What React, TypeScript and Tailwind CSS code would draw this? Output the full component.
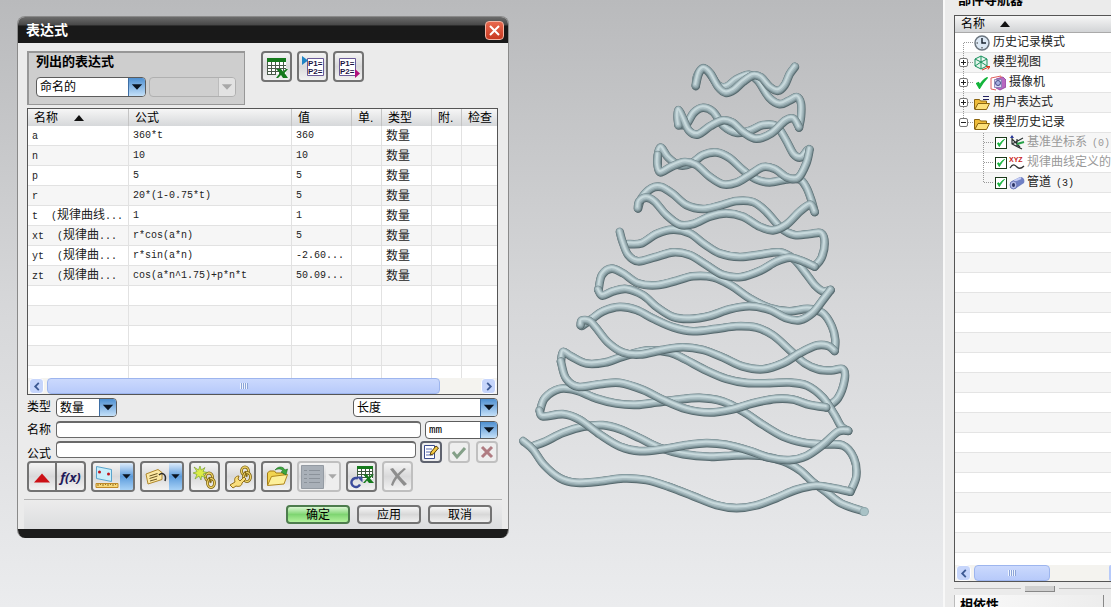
import React from "react";

type Point = [number, number];

type Turn = {
  at: string;
  back: Point[];
  front: Point[];
};

const TURNS: Turn[] = [
  {
    at: "translate(240 0)",
    back: [[318, 108], [322, 78], [340, 54], [360, 70], [385, 105], [410, 110], [440, 88], [478, 74], [505, 92], [538, 142], [570, 162], [598, 152], [622, 141], [634, 160], [634, 200], [628, 232]],
    front: [[616, 50], [600, 72], [585, 105], [565, 122], [540, 110], [515, 82], [490, 76], [460, 95], [432, 120], [408, 128], [385, 110], [362, 70], [343, 55], [328, 68], [318, 106]],
  },
  {
    at: "translate(240 0)",
    back: [[266, 224], [290, 222], [312, 188], [340, 173], [370, 185], [402, 228], [440, 248], [480, 242], [520, 225], [560, 228], [588, 268], [612, 312], [634, 322], [652, 302], [658, 298]],
    front: [[628, 232], [612, 206], [586, 212], [545, 250], [500, 266], [462, 247], [430, 218], [398, 211], [362, 228], [325, 253], [298, 242], [280, 205], [267, 180], [263, 200], [266, 226]],
  },
  {
    at: "translate(240 0)",
    back: [[204, 340], [205, 308], [215, 293], [235, 322], [270, 346], [305, 340], [340, 315], [380, 307], [420, 324], [460, 360], [500, 388], [540, 397], [590, 388], [630, 388], [650, 412], [665, 450], [675, 486]],
    front: [[660, 298], [650, 340], [625, 384], [592, 382], [556, 357], [520, 351], [480, 375], [440, 398], [400, 403], [360, 380], [320, 345], [285, 336], [245, 350], [212, 367], [203, 345], [204, 315]],
  },
  {
    at: "translate(240 0)",
    back: [[145, 475], [155, 445], [185, 415], [215, 411], [250, 432], [290, 465], [340, 477], [390, 467], [440, 453], [490, 456], [530, 485], [575, 535], [615, 555], [660, 552], [695, 550], [705, 580], [695, 625], [675, 650]],
    front: [[675, 486], [662, 464], [630, 485], [590, 524], [550, 541], [510, 530], [460, 500], [410, 490], [360, 500], [310, 522], [270, 524], [230, 495], [195, 455], [170, 443], [148, 455], [144, 475]],
  },
  {
    at: "translate(180 420)",
    back: [[175, 162], [215, 160], [260, 132], [310, 119], [360, 130], [405, 163], [450, 190], [510, 201], [570, 194], [630, 187], [672, 207], [710, 252], [735, 285], [760, 304], [783, 300]],
    front: [[735, 230], [700, 214], [660, 203], [620, 215], [570, 243], [515, 261], [460, 255], [410, 225], [360, 195], [310, 187], [255, 202], [205, 214], [175, 195], [158, 155], [150, 126]],
  },
  {
    at: "translate(180 420)",
    back: [[86, 300], [96, 256], [125, 236], [160, 250], [205, 280], [260, 286], [315, 274], [370, 259], [430, 262], [485, 287], [540, 325], [600, 354], [660, 364], [715, 357], [760, 370], [787, 410], [797, 450], [795, 483]],
    front: [[783, 300], [760, 330], [728, 370], [690, 391], [650, 385], [600, 360], [540, 349], [480, 358], [420, 378], [360, 387], [310, 381], [262, 352], [220, 316], [170, 297], [130, 304], [98, 317], [85, 300]],
  },
  {
    at: "translate(180 420)",
    back: [[36, 408], [65, 388], [100, 364], [150, 351], [200, 360], [250, 386], [310, 412], [370, 424], [440, 417], [500, 409], [560, 413], [610, 436], [660, 480], [705, 520], [745, 538], [785, 542], [820, 538], [825, 570], [805, 625], [770, 653]],
    front: [[795, 483], [775, 468], [740, 467], [690, 490], [640, 520], [580, 538], [520, 530], [460, 503], [400, 480], [340, 472], [280, 480], [210, 494], [160, 488], [115, 458], [80, 415], [60, 394], [36, 392], [32, 406]],
  },
  {
    at: "translate(0 840)",
    back: [[153, 95], [160, 66], [185, 80], [230, 101], [285, 98], [340, 80], [410, 62], [480, 68], [525, 88], [590, 122], [650, 147], [710, 159], [780, 160], [840, 158], [892, 167], [940, 203], [975, 255], [995, 290], [1016, 303]],
    front: [[950, 233], [900, 225], [850, 209], [800, 207], [730, 220], [670, 238], [600, 248], [530, 238], [460, 210], [400, 180], [330, 159], [270, 163], [205, 171], [168, 145], [153, 95]],
  },
  {
    at: "translate(0 840)",
    back: [[90, 245], [105, 205], [150, 177], [200, 182], [260, 206], [320, 221], [380, 225], [440, 218], [500, 210], [570, 204], [640, 215], [700, 245], [760, 285], [820, 320], [880, 338], [940, 344], [1000, 347], [1033, 385], [1040, 440], [1022, 486]],
    front: [[1016, 303], [985, 306], [940, 345], [890, 379], [840, 391], [780, 384], [720, 363], [650, 345], [590, 340], [530, 346], [460, 358], [390, 364], [330, 350], [270, 314], [210, 270], [160, 253], [100, 260], [89, 243]],
  },
  {
    at: "translate(0 840)",
    back: [[72, 348], [105, 336], [160, 309], [220, 291], [280, 286], [330, 298], [390, 325], [450, 354], [520, 373], [600, 381], [680, 377], [750, 378], [820, 394], [870, 421], [910, 457], [950, 487], [995, 521], [1060, 544]],
    front: [[1022, 486], [970, 475], [920, 468], [860, 480], [800, 505], [740, 527], [680, 535], [620, 526], [550, 499], [480, 472], [410, 451], [340, 446], [270, 455], [200, 459], [150, 445], [102, 405], [70, 360], [40, 334]],
  },
];

// Catmull-Rom through the points, written as cubic segments
function smooth(points: Point[]) {
  let d = `M${points[0][0]} ${points[0][1]}`;
  for (let i = 0; i < points.length - 1; i++) {
    const a = points[i - 1] ?? points[i];
    const b = points[i];
    const c = points[i + 1];
    const e = points[i + 2] ?? c;
    d += `C${b[0] + (c[0] - a[0]) / 6} ${b[1] + (c[1] - a[1]) / 6} ${c[0] - (e[0] - b[0]) / 6} ${c[1] - (e[1] - b[1]) / 6} ${c[0]} ${c[1]}`;
  }
  return d;
}

function Tube({ points, at }: { points: Point[]; at: string }) {
  const d = smooth(points);
  return (
    <g transform={at} fill="none" strokeLinecap="round" strokeLinejoin="round">
      <path d={d} stroke="#56696e" strokeWidth="25" transform="translate(0 1)" />
      <path d={d} stroke="#7b9095" strokeWidth="23" transform="translate(-1 -1)" />
      <path d={d} stroke="#96abb0" strokeWidth="18" transform="translate(-1 -2)" />
      <path d={d} stroke="#adc0c5" strokeWidth="13" transform="translate(-2 -3)" />
      <path d={d} stroke="#c8d9dc" strokeWidth="6" transform="translate(-2 -4)" />
    </g>
  );
}

function SpringModel() {
  return (
    <svg viewBox="0 0 1090 1400" className="mt-[34px] ml-px w-[363px] shrink-0" aria-label="管道">
      {TURNS.map((turn, i) => (
        <Tube key={i} points={turn.back} at={turn.at} />
      ))}
      {TURNS.map((turn, i) => (
        <Tube key={i} points={turn.front} at={turn.at} />
      ))}
      <circle cx="1064" cy="1386" r="14" fill="#8fa7ac" />
      <circle cx="1064" cy="1386" r="11" fill="#a9c2c6" />
    </svg>
  );
}

function Arrow({ muted }: { muted?: boolean }) {
  return (
    <svg viewBox="0 0 17 17" className="block h-full w-full">
      <path d="M3 5.500h11l-5.500 6z" fill={muted ? "#a8a8a8" : "#0b1420"} />
    </svg>
  );
}

type PickerProps = {
  label: string;
  value: string;
  className: string;
  disabled?: boolean;
  mono?: boolean;
};

function Picker({ label, value, className, disabled, mono }: PickerProps) {
  return (
    <div className={`relative ${className}`}>
      <select
        aria-label={label}
        disabled={disabled}
        className={`block h-full w-full appearance-none rounded border pl-[3px] leading-4 ${
          mono ? "font-['Liberation_Mono',monospace] text-[11px]" : "text-xs"
        } ${disabled ? "border-[#b0b0b0] bg-[#cfcfcf]" : "border-[#5c5c5c] bg-white text-black"}`}
      >
        <option>{value}</option>
      </select>
      <span
        className={`pointer-events-none absolute top-px right-px bottom-px w-[17px] rounded-r-[3px] border-l ${
          disabled
            ? "border-[#bcbcbc] bg-[#e2e2e2]"
            : "border-[#3d6ea5] bg-linear-to-b from-[#4d8fd0] to-[#c4e0f8]"
        }`}
      >
        <Arrow muted={disabled} />
      </span>
    </div>
  );
}

type ToolProps = {
  label: string;
  children: React.ReactNode;
  disabled?: boolean;
  menu?: boolean;
};

function Tool({ label, children, disabled, menu }: ToolProps) {
  return (
    <div
      className={`flex h-[31px] shrink-0 overflow-hidden rounded border-2 bg-linear-to-b from-[#f4f4f4] via-[#d9d9da] to-[#f2f2f2] ${
        disabled ? "border-[#bfbfbf]" : "border-[#737373]"
      }`}
    >
      <button type="button" aria-label={label} disabled={disabled} className="flex w-[27px] items-center justify-center">
        {children}
      </button>
      {menu && (
        <button
          type="button"
          aria-label={`${label}菜单`}
          disabled={disabled}
          className={`w-[13px] ${disabled ? "bg-[#eeeeee]" : "bg-linear-to-b from-[#dcebfa] via-[#5c9cdc] to-[#a8d2f6]"}`}
        >
          <Arrow muted={disabled} />
        </button>
      )}
    </div>
  );
}

function SheetIcon() {
  return (
    <svg viewBox="0 0 24 24" className="size-6">
      <path d="M2 3h19v16H2z" fill="#fff" />
      <path d="M2 3h19v4H2z" fill="#157a1c" />
      <path d="M2.500 7v12M6.500 7v12M10.500 7v12M14.500 7v12M18.500 7v9M2 10.500h19M2 13.500h19M2 16.500h12M2 19.500h9" stroke="#4a5a4a" fill="none" />
      <path d="M11 14h5l2 2.500 3-2.500h2l-3.500 4 3.500 5h-5l-2-3-3 3h-2l4-5z" fill="#157a1c" />
    </svg>
  );
}

function ParamIcon({ out }: { out?: boolean }) {
  return (
    <svg viewBox="0 0 24 24" className="size-6">
      <path d={out ? "M2.500 3.500h16v17h-16z" : "M6.500 3.500h16v17h-16z"} fill="#fff" stroke="#6a5a98" />
      <g fill="#1c1444" fontFamily="Liberation Sans, sans-serif" fontSize="8" fontWeight="bold">
        <text x={out ? 3 : 7} y="11">P1=</text>
        <text x={out ? 3 : 7} y="19">P2=</text>
      </g>
      <path d={out ? "M18 14l5 4.500-5 4.500z" : "M1 1l6 4.500-6 4.500z"} fill={out ? "#b0107c" : "#1f84c4"} />
    </svg>
  );
}

function MeasureIcon() {
  return (
    <svg viewBox="0 0 24 24" className="size-6">
      <path d="M1.500 1.500l15 3v12l-15-3z" fill="#c9eefa" stroke="#5aa4cc" />
      <circle cx="4.500" cy="7" r="1.500" fill="#c0141c" />
      <circle cx="13.500" cy="9" r="1.500" fill="#c0141c" />
      <path d="M1 18.500h22v4H1z" fill="#f7d778" stroke="#c08a28" />
      <path d="M3 19v2M5.500 19v1M8 19v2M10.500 19v1M13 19v2M15.500 19v1M18 19v2M20.500 19v1" stroke="#7c5a14" strokeWidth=".8" />
    </svg>
  );
}

function TagIcon() {
  return (
    <svg viewBox="0 0 24 24" className="size-6">
      <path d="M2 9l12-4.500 4 3v7L4 19z" fill="#fce9a4" stroke="#b0872c" />
      <path d="M5.500 11l8-2.500M5.500 13.500l8-2.500M6 16l7-2" stroke="#6a5420" />
      <path d="M15 10c3-3 8-1 6 6" stroke="#2a2a2a" fill="none" strokeWidth="1.500" />
    </svg>
  );
}

// two interlocked links, drawn as a dark ring under a gold one
function Chain({ at }: { at: string }) {
  return (
    <g fill="none" transform={at}>
      <ellipse cx="5" cy="5" rx="3.500" ry="4" stroke="#7c6210" strokeWidth="2.800" />
      <ellipse cx="5" cy="5" rx="3.500" ry="4" stroke="#f0d468" strokeWidth="1.300" />
      <ellipse cx="7" cy="11" rx="3.500" ry="4.500" stroke="#7c6210" strokeWidth="2.800" />
      <ellipse cx="7" cy="11" rx="3.500" ry="4.500" stroke="#f0d468" strokeWidth="1.300" />
      <path d="M5 5l2 6" stroke="#7c6210" strokeWidth="1.200" />
    </g>
  );
}

function NewLinkIcon() {
  return (
    <svg viewBox="0 0 24 24" className="size-6">
      <Chain at="translate(11 7)" />
      <path d="M7 1l1.200 4L12 2.500 10 6.500l4.500 1L10 9l3 4-4.500-2L8 15l-2-4-4 3 2-4.500L0 8l4-1.500L1 2l4.500 3z" fill="#dcec48" stroke="#6c9a24" strokeWidth=".6" />
    </svg>
  );
}

function EditLinkIcon() {
  return (
    <svg viewBox="0 0 24 24" className="size-6">
      <Chain at="translate(11 1)" />
      <path d="M1 20l5-3c-1-3 0-6 4-6l-1 3 2 2 4-4 2 2-4 4c0 3-3 4-6 3l-3 2z" fill="#f9de7c" stroke="#96721a" />
    </svg>
  );
}

function OpenIcon() {
  return (
    <svg viewBox="0 0 24 24" className="size-6">
      <path d="M2.500 20V8l2-2h5l1.500 2h8v4" fill="#f2d450" stroke="#a47c14" />
      <path d="M2.500 20.500l4-9 16-2-3.500 9.500z" fill="#fdf09a" stroke="#b0861c" />
      <path d="M10 5c3-4 8-4 10 0l2.500-1L21 10l-5-3 2-1c-2-2.500-5-2.500-8-1z" fill="#3ca83c" stroke="#1c6c20" strokeWidth=".6" />
    </svg>
  );
}

function ListIcon() {
  return (
    <svg viewBox="0 0 24 24" className="size-6">
      <path d="M.5.500h22v23H.5z" fill="#a9b0b8" stroke="#949ba3" />
      <path d="M3 5.500h3M8 5.500h11M3 9.500h3M8 9.500h11M3 13.500h3M8 13.500h11M3 17.500h3M8 17.500h11" stroke="#8b929a" />
    </svg>
  );
}

function RefreshSheetIcon() {
  return (
    <svg viewBox="0 0 24 24" className="size-6">
      <path d="M7 1h16v13H7z" fill="#fff" />
      <path d="M7 1h16v3H7z" fill="#157a1c" />
      <path d="M7.500 4v9M11.500 4v9M15.500 4v9M19.500 4v9M22.500 4v9M7 6.500h16M7 9.500h16M7 12.500h10" stroke="#3f5a3f" fill="none" />
      <path d="M13 9.500h4l2 2.500 3-2.500h2l-4 4 4 4.500h-5l-2-2.500-2 2.500h-2l4-4.500z" fill="#157a1c" />
      <path d="M8 13.500a4.500 4.500 0 1 0 2 6" stroke="#3c4c9c" strokeWidth="2.400" fill="none" />
      <path d="M6.500 11.500h6v6z" fill="#3c4c9c" />
    </svg>
  );
}

function MiniTool({ label, disabled, children }: ToolProps) {
  return (
    <button
      type="button"
      aria-label={label}
      disabled={disabled}
      className={`size-[22px] shrink-0 rounded border-2 bg-[#eeeeee] ${disabled ? "border-[#c0c0c0]" : "border-[#5e626e]"}`}
    >
      {children}
    </button>
  );
}

function ScrollEnd({ left }: { left?: boolean }) {
  return (
    <button
      type="button"
      aria-label={left ? "向左滚动" : "向右滚动"}
      className="flex w-[15px] shrink-0 items-center justify-center rounded-sm border border-white bg-[#c6d5fb]"
    >
      <svg viewBox="0 0 8 10" className="h-[9px] w-2">
        <path d={left ? "M6 1L2 5l4 4" : "M2 1l4 4-4 4"} fill="none" stroke="#3d5a94" strokeWidth="2" />
      </svg>
    </button>
  );
}

function Thumb({ className }: { className: string }) {
  return (
    <div className={`flex items-center justify-center rounded-sm border border-[#9db5ee] bg-linear-to-b from-[#cbd9fd] to-[#b7cafa] ${className}`}>
      <svg viewBox="0 0 8 6" className="h-1.5 w-2">
        <path d="M.5 0v6M2.500 0v6M4.500 0v6M6.500 0v6" stroke="#eef4fe" />
        <path d="M1.500 0v6M3.500 0v6M5.500 0v6M7.500 0v6" stroke="#8ca4d8" />
      </svg>
    </div>
  );
}

function SortMark({ className }: { className: string }) {
  return (
    <svg viewBox="0 0 10 6" className={`inline h-1.5 w-2.5 ${className}`}>
      <path d="M0 6l5-6 5 6z" fill="#111" />
    </svg>
  );
}

type Expression = {
  name: string;
  note?: string;
  formula: string;
  value: string;
};

const EXPRESSIONS: Expression[] = [
  { name: "a", formula: "360*t", value: "360" },
  { name: "n", formula: "10", value: "10" },
  { name: "p", formula: "5", value: "5" },
  { name: "r", formula: "20*(1-0.75*t)", value: "5" },
  { name: "t", note: "规律曲线", formula: "1", value: "1" },
  { name: "xt", note: "规律曲", formula: "r*cos(a*n)", value: "5" },
  { name: "yt", note: "规律曲", formula: "r*sin(a*n)", value: "-2.60..." },
  { name: "zt", note: "规律曲", formula: "cos(a*n^1.75)+p*n*t", value: "50.09..." },
];

const CELL = "overflow-hidden border-r border-b border-[#e2e2e2] p-0 pl-1 whitespace-nowrap last:border-r-0";
const HEAD = "border-r border-[#c4c4c4] p-0 pl-1.5 text-left font-normal whitespace-nowrap last:border-r-0";
const MONO = "font-['Liberation_Mono',monospace] text-[10px] text-[#222]";

function ExpressionTable() {
  return (
    <div className="border border-[#555] bg-white">
      <div className="h-[269px] overflow-hidden">
        <table className="w-full table-fixed border-separate border-spacing-0 text-xs">
          <colgroup>
            <col className="w-[101px]" />
            <col />
            <col className="w-[60px]" />
            <col className="w-[30px]" />
            <col className="w-[50px]" />
            <col className="w-[30px]" />
            <col className="w-[35px]" />
          </colgroup>
          <thead>
            <tr className="h-[17px] bg-linear-to-b from-[#f6f6f6] to-[#d6d8da] leading-4">
              <th className={HEAD}>
                名称
                <SortMark className="ml-4" />
              </th>
              <th className={HEAD}>公式</th>
              <th className={HEAD}>值</th>
              <th className={HEAD}>单.</th>
              <th className={HEAD}>类型</th>
              <th className={HEAD}>附.</th>
              <th className={HEAD}>检查</th>
            </tr>
          </thead>
          <tbody>
            {EXPRESSIONS.map((row) => (
              <tr key={row.name} className="h-5 leading-4 even:bg-[#f6f6f6]">
                <td className={CELL}>
                  <span className={MONO}>{row.name}</span>
                  {row.note && (
                    <span className="ml-[13px] text-[#222]">
                      <span className={MONO}>(</span>
                      {row.note}
                      <span className={MONO}>...</span>
                    </span>
                  )}
                </td>
                <td className={`${CELL} ${MONO}`}>{row.formula}</td>
                <td className={`${CELL} ${MONO}`}>{row.value}</td>
                <td className={CELL} />
                <td className={`${CELL} text-[#222]`}>数量</td>
                <td className={CELL} />
                <td className={CELL} />
              </tr>
            ))}
            {[0, 1, 2, 3, 4].map((n) => (
              <tr key={n} className="h-5 even:bg-[#f6f6f6]">
                {[0, 1, 2, 3, 4, 5, 6].map((c) => (
                  <td key={c} className={CELL} />
                ))}
              </tr>
            ))}
          </tbody>
        </table>
      </div>
      <div className="flex h-4 gap-[3px] bg-[#f4f3ef] px-px">
        <ScrollEnd left />
        <Thumb className="w-[393px]" />
        <div className="flex-1" />
        <ScrollEnd />
      </div>
    </div>
  );
}

const FIELD = "h-[17px] min-w-0 flex-1 rounded border border-t-2 border-[#6a6a6a] bg-white px-1 text-xs";
const ACTION = "h-[19px] w-16 rounded border-2 text-xs leading-[14px] text-black";

function ExpressionDialog() {
  return (
    <section className="flex w-[492px] shrink-0 flex-col overflow-hidden rounded-t-lg rounded-b-lg border border-[#8a8a8a] border-b-0 bg-[#ebebeb]">
      <header className="flex h-[26px] items-center justify-between bg-linear-to-b from-[#6c6c6c] from-0% via-[#484848] via-30% to-[#191919] to-35% pr-1 pl-2">
        <h1 className="text-sm leading-5 font-bold text-white">表达式</h1>
        <button type="button" aria-label="关闭" className="flex size-[19px] items-center justify-center rounded-sm border border-[#f4b4a4] bg-linear-to-b from-[#e8684e] to-[#c83820]">
          <svg viewBox="0 0 11 11" className="size-[11px]">
            <path d="M1 1l9 9M10 1l-9 9" stroke="#fff" strokeWidth="2" />
          </svg>
        </button>
      </header>

      <div className="flex flex-col pt-2 pr-2.5 pl-[9px]">
        <div className="flex items-start">
          <fieldset className="mr-4 flex h-[54px] w-[218px] flex-col border border-t-2 border-l-2 border-[#979797] bg-[#cecece] pl-[7px]">
            <span className="pt-px text-[13px] leading-4 font-bold">列出的表达式</span>
            <div className="mt-[7px] flex gap-[3px]">
              <Picker label="列出的表达式" value="命名的" className="h-5 w-[110px]" />
              <Picker label="过滤器" value="" className="h-5 w-[87px]" disabled />
            </div>
          </fieldset>
          <div className="flex gap-[5px]">
            <Tool label="电子表格编辑">
              <SheetIcon />
            </Tool>
            <Tool label="导入表达式">
              <ParamIcon />
            </Tool>
            <Tool label="导出表达式">
              <ParamIcon out />
            </Tool>
          </div>
        </div>

        <div className="mt-[3px]">
          <ExpressionTable />
        </div>

        <div className="mt-[3px] flex h-[19px] text-xs leading-[19px]">
          <span className="w-[29px]">类型</span>
          <Picker label="类型" value="数量" className="w-[61px]" />
          <div className="flex-1" />
          <Picker label="量纲" value="长度" className="w-[145px]" />
        </div>
        <div className="mt-1 flex h-[18px] text-xs leading-[18px]">
          <label htmlFor="expression-name" className="w-[29px]">名称</label>
          <input id="expression-name" className={FIELD} />
          <Picker label="单位" value="mm" className="ml-1 w-[73px]" mono />
        </div>
        <div className="mt-0.5 flex h-5 text-xs">
          <label htmlFor="expression-formula" className="w-[29px] pt-1 leading-[18px]">公式</label>
          <input id="expression-formula" className={FIELD} />
          <div className="ml-1 flex gap-1.5">
            <MiniTool label="编辑公式">
              <svg viewBox="0 0 18 18" className="size-[18px]">
                <path d="M2.500 2.500h10v13h-10z" fill="#fff" stroke="#3a4a8c" />
                <path d="M4 6h6M4 9h5M4 12h7" stroke="#5a6cb4" />
                <path d="M8 12l1-3 5-6 2.500 2-5 6z" fill="#f2c640" stroke="#5a4410" />
              </svg>
            </MiniTool>
            <MiniTool label="接受" disabled>
              <svg viewBox="0 0 18 18" className="size-[18px]">
                <path d="M3 9l4 5 8-9" fill="none" stroke="#84a088" strokeWidth="3" />
              </svg>
            </MiniTool>
            <MiniTool label="拒绝" disabled>
              <svg viewBox="0 0 18 18" className="size-[18px]">
                <path d="M4 4l10 10M14 4L4 14" stroke="#b07c82" strokeWidth="3" />
              </svg>
            </MiniTool>
          </div>
        </div>

        <div className="flex gap-[5px]">
          <div className="flex h-[31px] w-[59px] overflow-hidden rounded border-2 border-[#737373] bg-linear-to-b from-[#f4f4f4] via-[#d9d9da] to-[#f2f2f2]">
            <button type="button" aria-label="更少选项" className="flex w-[28px] items-center justify-center border-r-2 border-[#737373]">
              <svg viewBox="0 0 18 10" className="mt-0.5 h-2.5 w-4">
                <path d="M0 10L9 0l9 10z" fill="#cc1016" />
              </svg>
            </button>
            <button type="button" className="flex-1 font-['Open_Sans',sans-serif] text-[13px] leading-5 font-bold text-[#221a58] italic">
              f(x)
            </button>
          </div>
          <Tool label="测量" menu>
            <MeasureIcon />
          </Tool>
          <Tool label="属性" menu>
            <TagIcon />
          </Tool>
          <Tool label="创建部件间表达式">
            <NewLinkIcon />
          </Tool>
          <Tool label="编辑部件间表达式">
            <EditLinkIcon />
          </Tool>
          <Tool label="打开引用的部件">
            <OpenIcon />
          </Tool>
          <Tool label="函数" menu disabled>
            <ListIcon />
          </Tool>
          <Tool label="更新外部表达式">
            <RefreshSheetIcon />
          </Tool>
          <Tool label="删除" disabled>
            <svg viewBox="0 0 24 24" className="size-6">
              <path d="M4 4l3-1c4 5 8 10 14 16l-3 2C13 15 8 10 4 4z" fill="#8e8e8e" />
              <path d="M18 3l2 1C14 9 9 15 7 21l-2-1C7 13 12 8 18 3z" fill="#8e8e8e" />
            </svg>
          </Tool>
        </div>
      </div>

      <footer className="mx-1.5 mt-[7px] flex h-[30px] justify-end gap-[7px] border-t border-[#b4b4b4] bg-linear-to-b from-[#ececec] to-[#dcdddf] pt-[5px] pr-2.5">
        <button type="button" className={`${ACTION} border-[#4d7c4d] bg-linear-to-b from-[#d8f6d0] via-[#7fd572] to-[#b2f29c]`}>
          确定
        </button>
        <button type="button" className={`${ACTION} border-[#737373] bg-linear-to-b from-[#f6f6f6] via-[#d8d8d8] to-[#f0f0f0]`}>
          应用
        </button>
        <button type="button" className={`${ACTION} border-[#737373] bg-linear-to-b from-[#f6f6f6] via-[#d8d8d8] to-[#f0f0f0]`}>
          取消
        </button>
      </footer>
      <div className="h-[9px] bg-[#1c1c1c]" />
    </section>
  );
}

function Branch({ open, first, last }: { open?: boolean; first?: boolean; last?: boolean }) {
  return (
    <svg viewBox="0 0 19 20" className="block h-5 w-[19px]">
      <path d={`M8.500 ${first ? 10 : 0}V${last ? 10 : 20}M9 9.500h10`} stroke="#999" strokeDasharray="1 1" fill="none" />
      {!first && (
        <>
          <rect x="4.500" y="5.500" width="8" height="8" rx="1.500" fill="#fff" stroke="#777" />
          <path d={open ? "M6 9.500h5" : "M6 9.500h5M8.500 7v5"} stroke="#222" />
        </>
      )}
    </svg>
  );
}

function FolderIcon({ marked }: { marked?: boolean }) {
  return (
    <svg viewBox="0 0 16 16" className="size-4">
      <path d="M.5 14V4.500h5l1 1.500h6v3" fill="#f0bc38" stroke="#8a6410" />
      <path d="M.8 14.500L4 8.500h11.500l-3 6z" fill="#fde07a" stroke="#8a6410" />
      {marked && <path d="M9 1.500h6M9 4.500h6" stroke="#222060" />}
    </svg>
  );
}

function Tick({ className }: { className: string }) {
  return (
    <svg viewBox="0 0 12 12" className={className}>
      <path d="M.5 6.500L3.500 11.500C6 7 8.500 3.500 11.500.5 8 2 5.500 5 4 7.800L2.500 5.500z" fill="#12b43a" stroke="#12b43a" strokeWidth="1.200" />
    </svg>
  );
}

type NodeProps = {
  icon: React.ReactNode;
  text: string;
  open?: boolean;
  first?: boolean;
  last?: boolean;
};

const NODE = "flex h-5 items-center border-b border-[#e4e4e4] whitespace-nowrap even:bg-[#f6f6f6]";

function TreeNode({ open, first, last, icon, text }: NodeProps) {
  return (
    <li className={NODE}>
      {first ? (
        <Branch first />
      ) : (
        <button type="button" aria-label={`${open ? "折叠" : "展开"}${text}`}>
          <Branch open={open} last={last} />
        </button>
      )}
      {icon}
      <span className="ml-[3px] text-[#222]">{text}</span>
    </li>
  );
}

type LeafProps = {
  icon: React.ReactNode;
  text: string;
  count?: string;
  muted?: boolean;
  last?: boolean;
};

function TreeLeaf({ icon, text, count, muted, last }: LeafProps) {
  return (
    <li className={NODE}>
      <svg viewBox="0 0 40 20" className="h-5 w-10 shrink-0">
        <path d={`M28.500 0V${last ? 10 : 20}M29 9.500h9`} stroke="#999" strokeDasharray="1 1" fill="none" />
      </svg>
      <label className="flex items-center">
        <span className="relative mr-0.5 size-3">
          <input type="checkbox" defaultChecked className="block size-3 appearance-none border border-[#1a3a1a] bg-white" />
          <Tick className="pointer-events-none absolute top-0.5 left-0.5 size-2" />
        </span>
        {icon}
        <span className={muted ? "ml-0.5 text-[#999]" : "ml-0.5 text-[#222]"}>
          {text}
          {count && <span className="ml-[5px] font-['Liberation_Mono',monospace] text-[10px]">{count}</span>}
        </span>
      </label>
    </li>
  );
}

function PartNavigator() {
  return (
    <aside className="flex w-[168px] shrink-0 flex-col overflow-hidden border-l-2 border-[#f8f8f8] bg-[#ebebeb] pl-[9px] text-xs">
      <h2 className="-mt-2 h-[23px] pl-1 text-[13px] leading-4 font-bold whitespace-nowrap">部件导航器</h2>
      <div className="flex min-h-0 flex-1 flex-col border border-r-0 border-[#555] bg-white">
        <div className="flex h-[17px] shrink-0 items-center border-b border-[#aaa] bg-linear-to-b from-[#f6f6f6] to-[#d2d4d6] pl-1.5 leading-4">
          名称
          <SortMark className="ml-[15px]" />
        </div>
        <ul className="min-h-0 flex-1 overflow-hidden leading-[19px]">
          <TreeNode
            first
            text="历史记录模式"
            icon={
              <svg viewBox="0 0 16 16" className="size-4">
                <circle cx="8" cy="8" r="7" fill="#dce8f4" stroke="#6c7680" strokeWidth="1.500" />
                <path d="M8 3v5h4" fill="none" stroke="#1a2430" strokeWidth="1.500" />
                <path d="M8 12v1.500M2.500 8h1.500" stroke="#333" />
              </svg>
            }
          />
          <TreeNode
            text="模型视图"
            icon={
              <svg viewBox="0 0 16 16" className="size-4">
                <path d="M1 4l6-3 6 3v7l-6 3-6-3zM1 4l6 3 6-3M7 1v13M1 11l6-4 6 4" fill="#e4f6ec" stroke="#18905c" />
                <path d="M8 15l7-3M12 11.500h4l-2 3" stroke="#d83820" fill="none" />
              </svg>
            }
          />
          <TreeNode
            text="摄像机"
            icon={
              <>
                <Tick className="mx-0.5 size-3" />
                <svg viewBox="0 0 16 16" className="size-4">
                  <path d="M6 4l7-2 3 3v7l-6 3-4-2z" fill="#b868c0" stroke="#8a3c98" strokeWidth=".8" />
                  <path d="M4.500 4.500h7v8h-7z" fill="#dcd8f2" stroke="#7c78b0" strokeWidth=".8" />
                  <circle cx="8" cy="8" r="2.500" fill="#a8b0e0" stroke="#444c88" />
                  <path d="M1 3l10-2v2M1 3v11l5 1" fill="none" stroke="#e06060" />
                </svg>
              </>
            }
          />
          <TreeNode text="用户表达式" icon={<FolderIcon marked />} />
          <TreeNode open last text="模型历史记录" icon={<FolderIcon />} />
          <TreeLeaf
            muted
            text="基准坐标系"
            count="(0)"
            icon={
              <svg viewBox="0 0 16 16" className="size-4">
                <path d="M3 1v8l10 5M3 9l11-6M3 4l8 8M8 4v8" fill="none" stroke="#2c3434" strokeWidth="1.200" />
                <path d="M8 9l7-2" stroke="#28a048" strokeWidth="2" />
                <path d="M1 3l2-3 2 3" fill="#2c3c9c" />
              </svg>
            }
          />
          <TreeLeaf
            muted
            text="规律曲线定义的"
            icon={
              <svg viewBox="0 0 16 16" className="size-4">
                <text x="0" y="7" fontSize="7" fontWeight="bold" fontFamily="Liberation Sans, sans-serif" fill="#c81c20">XYZ</text>
                <path d="M1 13c3-5 5-3 7-1s4 2 7-1" fill="none" stroke="#333" strokeWidth="1.300" />
              </svg>
            }
          />
          <TreeLeaf
            last
            text="管道"
            count="(3)"
            icon={
              <svg viewBox="0 0 16 16" className="size-4">
                <path d="M3 6l8-4c4 0 5 3 4 6l-9 6z" fill="#7080c4" />
                <path d="M5 6l7-3" stroke="#c4ccf4" strokeWidth="2" />
                <ellipse cx="4.500" cy="10" rx="3.500" ry="4" fill="#b4bce8" stroke="#6c78b8" />
                <ellipse cx="4.500" cy="10" rx="1.500" ry="2" fill="#2c3464" />
              </svg>
            }
          />
          {Array.from({ length: 18 }, (_, n) => (
            <li key={n} aria-hidden="true" className={NODE} />
          ))}
        </ul>
        <div className="flex h-4 shrink-0 gap-[3px] bg-[#f4f3ef] pl-px">
          <ScrollEnd left />
          <Thumb className="w-[76px]" />
          <div className="flex-1" />
          <div className="w-0.5 rounded-l-sm bg-[#b7cafa]" />
        </div>
      </div>
      <div className="flex h-[13px] shrink-0 items-center gap-1">
        <div className="flex-1 border-t border-[#bbb]" />
        <div className="h-1.5 w-[30px] border-r border-b border-[#888] bg-[#cfcfcf]" />
        <div className="w-[52px] border-t border-[#bbb]" />
      </div>
      <div className="flex h-3 shrink-0 overflow-hidden border-l border-[#bbb] bg-linear-to-r from-[#fafafa] to-[#ececec]">
        <h2 className="flex-1 pt-0.5 pl-[5px] text-[13px] leading-4 font-bold">相依性</h2>
        <button type="button" aria-label="展开相依性" className="w-2 border-l border-[#888]" />
      </div>
    </aside>
  );
}

export default function App() {
  return (
    <div className="flex h-screen overflow-hidden bg-linear-to-b from-[#b9babc] via-[#d6d7d9] to-[#ebecee] font-['Liberation_Sans','Noto_Sans_CJK_SC',sans-serif] text-black">
      <main className="flex min-w-0 flex-1 items-start overflow-hidden pt-4 pl-[17px]">
        <ExpressionDialog />
        <SpringModel />
      </main>
      <PartNavigator />
    </div>
  );
}
